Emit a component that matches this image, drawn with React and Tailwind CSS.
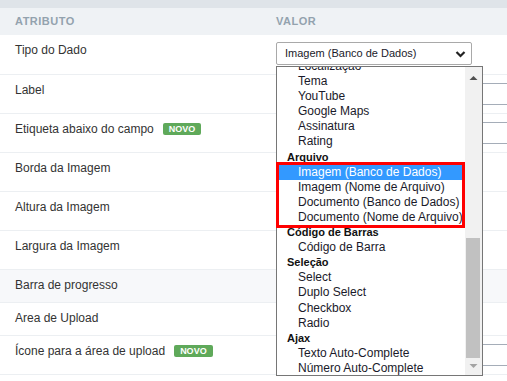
import React from 'react';

const rows = [
  { label: 'Tipo do Dado', h: 'h-[40px]', field: 'select' },
  { label: 'Label', h: 'h-[39px]', field: 'input' },
  { label: 'Etiqueta abaixo do campo', h: 'h-[39px]', field: 'input', badge: true },
  { label: 'Borda da Imagem', h: 'h-[39px]' },
  { label: 'Altura da Imagem', h: 'h-[39px]' },
  { label: 'Largura da Imagem', h: 'h-[39px]' },
  { label: 'Barra de progresso', h: 'h-[33px]', shaded: true },
  { label: 'Area de Upload', h: 'h-[33px]' },
  { label: 'Ícone para a área de upload', h: 'h-[39px]', field: 'input', badge: true },
];

const options = [
  { t: 'Localização' },
  { t: 'Tema' },
  { t: 'YouTube' },
  { t: 'Google Maps' },
  { t: 'Assinatura' },
  { t: 'Rating' },
  { t: 'Arquivo', group: true },
  { t: 'Imagem (Banco de Dados)', selected: true },
  { t: 'Imagem (Nome de Arquivo)' },
  { t: 'Documento (Banco de Dados)' },
  { t: 'Documento (Nome de Arquivo)' },
  { t: 'Código de Barras', group: true },
  { t: 'Código de Barra' },
  { t: 'Seleção', group: true },
  { t: 'Select' },
  { t: 'Duplo Select' },
  { t: 'Checkbox' },
  { t: 'Radio' },
  { t: 'Ajax', group: true },
  { t: 'Texto Auto-Complete' },
  { t: 'Número Auto-Complete' },
];

function Badge() {
  return (
    <span className="ml-[9px] inline-flex h-[12px] items-center rounded-[2px] bg-[#5fa95a] px-[6px] text-[9px] font-bold leading-none text-white">
      NOVO
    </span>
  );
}

function Dropdown() {
  return (
    <div className="absolute left-[276px] top-[66px] flex h-[310px] w-[207px] border border-[#767676] bg-white">
      <div className="relative flex-1 overflow-hidden">
        <div className="mt-[-8px]">
          {options.map((o, i) =>
            o.group ? (
              <div key={i} className="h-[15.1px] whitespace-nowrap pl-[10px] text-[11px] font-bold leading-[15.1px] text-[#111]">
                {o.t}
              </div>
            ) : (
              <div
                key={i}
                className={
                  o.selected
                    ? 'h-[15.1px] whitespace-nowrap bg-[#3399ff] pl-[21px] text-[12px] leading-[15.1px] text-white'
                    : 'h-[15.1px] whitespace-nowrap pl-[21px] text-[12px] leading-[15.1px] text-[#1a1a2a]'
                }
              >
                {o.t}
              </div>
            )
          )}
        </div>
      </div>
      {/* scrollbar */}
      <div className="relative w-[17px] bg-[#f1f1f1]">
        <svg className="absolute left-[4px] top-[8px]" width="9" height="6" viewBox="0 0 9 6">
          <polygon points="0.5,5 4.5,1 8.5,5" fill="#505050" />
        </svg>
        <div className="absolute left-[1px] top-[171px] h-[120px] w-[14px] bg-[#c1c1c1]" />
        <svg className="absolute left-[4px] top-[296px]" width="9" height="6" viewBox="0 0 9 6">
          <polygon points="0.5,1 4.5,5 8.5,1" fill="#a3a3a3" />
        </svg>
      </div>
      {/* highlight frame */}
      <div className="absolute left-[-1px] top-[95px] h-[66px] w-[189px] border-[3px] border-[#ff0000]" />
    </div>
  );
}

export default function App() {
  return (
    <div className="relative h-[381px] w-[507px] overflow-hidden bg-white font-['Liberation_Sans',Arial,sans-serif] text-[12px] text-[#333]">
      <div className="h-[8px] bg-[#dfe4e9]" />
      <div className="flex h-[27px] items-center bg-[#eff2f5] text-[11px] font-bold tracking-[0.5px] text-[#93a2ae]">
        <div className="w-[261px] shrink-0 pl-[15px]">ATRIBUTO</div>
        <div className="pl-[15px]">VALOR</div>
      </div>
      {rows.map((r, i) => (
        <div
          key={i}
          className={`flex ${r.h} border-b border-[#eceff2] ${r.shaded ? 'bg-[#f7f8fa]' : 'bg-white'}`}
        >
          <div className="flex w-[261px] shrink-0 items-start whitespace-nowrap pl-[15px] pt-[8px]">
            <span className="leading-[15px]">{r.label}</span>
            {r.badge && <span className="mt-[1px] flex"><Badge /></span>}
          </div>
          <div className="min-w-0 flex-1 pl-[15px]">
            {r.field === 'select' && (
              <div className="mt-[7px] flex h-[23px] w-[196px] items-center justify-between rounded-[2px] border border-[#a9a9a9] bg-white pl-[8px] pr-[5px] text-[11px] text-[#1a1a2a]">
                <span>Imagem (Banco de Dados)</span>
                <svg width="11" height="8" viewBox="0 0 11 8">
                  <polyline points="1.5,2 5.5,6 9.5,2" fill="none" stroke="#222" strokeWidth="2.2" />
                </svg>
              </div>
            )}
            {r.field === 'input' && (
              <div className="mt-[8px] h-[22px] w-[300px] border border-[#a5adb8] bg-white" />
            )}
          </div>
        </div>
      ))}
      <Dropdown />
    </div>
  );
}
